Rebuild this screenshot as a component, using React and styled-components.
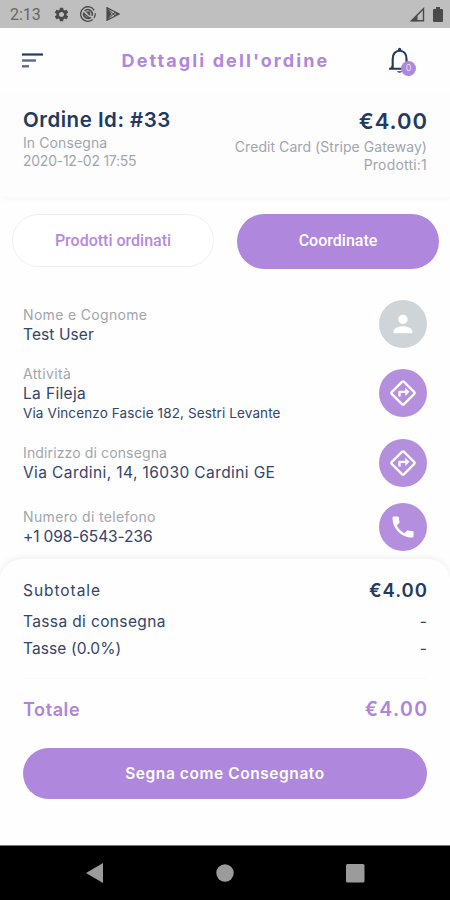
import React from "react";
import styled, { createGlobalStyle, css } from "styled-components";
import {
  MdPerson,
  MdOutlineDirections,
  MdPhone,
  MdSettings,
} from "react-icons/md";

const purple = "#af87dc";
const navy = "#223a60";
const slate = "#34446a";
const grey = "#a1a5ae";

const GlobalStyle = createGlobalStyle`
  * {
    box-sizing: border-box;
  }
  body {
    margin: 0;
    background: #fefefe;
    font-family: Inter, "Open Sans", sans-serif;
    color: ${navy};
  }
`;

const Screen = styled.div`
  display: flex;
  flex-direction: column;
  width: 450px;
  height: 900px;
  overflow: hidden;
`;

const StatusBar = styled.div`
  display: flex;
  align-items: center;
  justify-content: space-between;
  height: 28px;
  padding: 0 7px 0 10px;
  background: #bfbfbf;
  color: #4a4a4a;
`;
const StatusGroup = styled.div`
  display: flex;
  align-items: center;
  gap: ${(props) => props.$gap}px;
`;
const Clock = styled.span`
  width: 33px;
  font: 400 16px Roboto, sans-serif;
  color: #666;
`;

const Header = styled.header`
  display: flex;
  align-items: center;
  justify-content: space-between;
  height: 66px;
  padding: 0 33px 0 22px;
`;
const Title = styled.h1`
  margin: 0 0 1px 18px;
  font-size: 18px;
  font-weight: 700;
  letter-spacing: 2.1px;
  color: ${purple};
`;
const BellBox = styled.div`
  position: relative;
  width: 28px;
  height: 28px;
`;
const Badge = styled.span`
  position: absolute;
  right: 1px;
  bottom: -1px;
  width: 15px;
  height: 15px;
  border-radius: 50%;
  background: ${purple};
  color: #e6d8f6;
  font-size: 9px;
  line-height: 14px;
  text-align: center;
`;

const Order = styled.section`
  display: flex;
  justify-content: space-between;
  height: 103px;
  padding: 13px 23px 0;
  background: #fdfdfe;
  box-shadow: 0 2px 5px rgba(0, 0, 0, 0.035);
`;
const OrderSide = styled.div`
  display: flex;
  flex-direction: column;
  align-items: ${(props) => (props.$right ? "flex-end" : "flex-start")};
  padding-top: ${(props) => (props.$right ? 1 : 0)}px;
`;

const spacing = css`
  letter-spacing: ${(props) => props.$space || 0}px;
  white-space: nowrap;
`;

const OrderHeading = styled.h2`
  margin: 0 ${(props) => -props.$space}px ${(props) => props.$gap}px 0;
  font-size: ${(props) => props.$size}px;
  font-weight: 600;
  line-height: 26px;
  ${spacing}
`;
const Muted = styled.div`
  font-size: 14px;
  line-height: 18px;
  color: ${grey};
  ${spacing}
`;

const Tabs = styled.div`
  display: flex;
  gap: 23px;
  padding: 17px 11px 0 12px;
`;
const Tab = styled.button`
  width: 202px;
  height: ${(props) => (props.$active ? 55 : 53)}px;
  padding: 0 0 ${(props) => (props.$active ? 2 : 0)}px;
  border: ${(props) => (props.$active ? "0" : "1px solid #f0eff5")};
  border-radius: 28px;
  background: ${(props) => (props.$active ? purple : "#fff")};
  color: ${(props) => (props.$active ? "#fff" : "#b68add")};
  font: 500 16px Roboto, sans-serif;
`;

const Details = styled.div`
  height: 290px;
  padding: 24px 23px 0;
`;
const DetailRow = styled.div`
  display: flex;
  justify-content: space-between;
  align-items: center;
  height: ${(props) => props.$height}px;
`;
const DetailText = styled.div`
  padding-top: 2px;
`;
const Value = styled.div`
  font-size: ${(props) => (props.$small ? 13.5 : 15.5)}px;
  line-height: ${(props) => (props.$small ? 19 : 21)}px;
  color: ${slate};
  ${spacing}
`;
const RoundButton = styled.button`
  display: flex;
  align-items: center;
  justify-content: center;
  width: 48px;
  height: 48px;
  padding: 0;
  border: 0;
  border-radius: 50%;
  background: ${(props) => (props.$off ? "#cfd4d9" : "#b48fde")};
  color: #fff;
`;

const Summary = styled.section`
  position: relative;
  flex: 1;
  padding: 17px 23px 0;
  border-radius: 22px 22px 0 0;
  background: #fefefe;
  box-shadow: 0 -2px 6px rgba(0, 0, 0, 0.06);
`;
const SummaryRow = styled.div`
  display: flex;
  justify-content: space-between;
  align-items: center;
  height: ${(props) => props.$height}px;
`;
const SummaryLabel = styled.span`
  font-size: 15.5px;
  color: ${slate};
  ${spacing}
`;
const Amount = styled.span`
  margin-right: ${(props) => -props.$space}px;
  font-size: 18.5px;
  font-weight: 600;
  ${spacing}
`;
const Total = styled(SummaryRow)`
  margin-top: 20px;
  border-top: 1px solid #fafafb;
  color: #b083dc;
`;
const TotalLabel = styled.span`
  font-size: 18px;
  font-weight: 600;
  ${spacing}
`;
const TotalAmount = styled(Amount)`
  font-size: 19.5px;
`;
const Confirm = styled.button`
  display: block;
  width: 404px;
  height: 51px;
  margin-top: 9px;
  padding: 0;
  border: 0;
  border-radius: 26px;
  background: ${purple};
  color: #fff;
  font: 600 15.5px Inter, sans-serif;
  ${spacing}
`;

const NavBar = styled.nav`
  display: flex;
  justify-content: space-between;
  height: 55px;
  padding: 17px 85px 0 86px;
  border-top: 1px solid #777;
  background: #000;
`;

const SortIcon = () => (
  <svg width="22" height="16" viewBox="0 0 22 16">
    <path d="M0 1.5h21" stroke={navy} strokeWidth="2.2" />
    <path d="M0 7.5h14" stroke="#5a6c8b" strokeWidth="2.4" />
    <path d="M0 13.3h7" stroke="#5a6c8b" strokeWidth="2.4" />
  </svg>
);

const BellIcon = () => (
  <svg width="24" height="28" viewBox="0 0 24 28" fill="none">
    <path
      d="M0 21.7h20M3.7 21.5V12c0-5 2.6-8.2 6.9-8.2s6.9 3.2 6.9 8.2v9.5"
      stroke={navy}
      strokeWidth="2.1"
    />
    <path d="M1.4 20.6 3.7 17.5v3.5z" fill={navy} />
    <circle cx="10.6" cy="2.4" r="1.6" fill={navy} />
    <path d="M7.9 24.2a2.8 2 0 0 0 5.4 0z" fill={navy} />
  </svg>
);

const SyncIcon = () => (
  <svg width="16" height="16" viewBox="0 0 16 16" fill="none" stroke="currentColor">
    <path d="M14.2 4.3A7.3 7.3 0 1 0 12.7 13.6M15.2 7.2a7.3 7.3 0 0 1-1.3 5" strokeWidth="1.3" />
    <path d="M4.6 4.8A4.6 4.6 0 0 1 12 9.8M11 11.4A4.6 4.6 0 0 1 3.8 6.4" strokeWidth="1.6" />
    <path d="M5.5 5.6h4.7v4.6z" fill="currentColor" stroke="none" />
    <path d="M4 7.5l5.5 4.5" strokeWidth="1.2" />
  </svg>
);

const PlayIcon = () => (
  <svg width="14" height="14" viewBox="0 0 14 14">
    <path d="M1 .7v12.6L13.2 7z" fill="none" stroke="currentColor" strokeWidth="1.2" />
    <path d="M1 .7v12.6L5.7 7z" fill="currentColor" />
    <path d="M1 .7 9.3 9M1 13.3 9.3 5M9.3 5l-2 2 2 2" fill="none" stroke="currentColor" />
    <path d="M9.5 5l3.7 2-3.7 2z" fill="currentColor" />
  </svg>
);

const details = [
  {
    label: "Nome e Cognome",
    labelSpace: 0.33,
    lines: [{ text: "Test User", space: 0.1 }],
    height: 62,
    icon: MdPerson,
    off: true,
  },
  {
    label: "Attività",
    labelSpace: 0.35,
    lines: [
      { text: "La Fileja", space: 0.35 },
      { text: "Via Vincenzo Fascie 182, Sestri Levante", space: 0.12, small: true },
    ],
    height: 76,
    icon: MdOutlineDirections,
  },
  {
    label: "Indirizzo di consegna",
    labelSpace: 0.13,
    lines: [{ text: "Via Cardini, 14, 16030 Cardini GE", space: 0.4 }],
    height: 63,
    icon: MdOutlineDirections,
  },
  {
    label: "Numero di telefono",
    labelSpace: 0.35,
    lines: [{ text: "+1 098-6543-236", space: -0.1 }],
    height: 65,
    icon: MdPhone,
  },
];

const App = () => {
  return (
    <Screen>
      <GlobalStyle />
      <StatusBar>
        <StatusGroup $gap={10}>
          <Clock>2:13</Clock>
          <MdSettings size={17} />
          <SyncIcon />
          <PlayIcon />
        </StatusGroup>
        <StatusGroup $gap={8}>
          <svg width="15" height="15" viewBox="0 0 15 15">
            <path d="M1.5 13.8h12V1.8z" fill="none" stroke="currentColor" strokeWidth="1.4" />
            <path d="M1 14.3h6.5V8z" fill="currentColor" />
          </svg>
          <svg width="10" height="15" viewBox="0 0 10 15">
            <path d="M3 0h4v2h2q1 0 1 1v11q0 1-1 1H1q-1 0-1-1V3q0-1 1-1h2z" fill="currentColor" />
          </svg>
        </StatusGroup>
      </StatusBar>

      <Header>
        <SortIcon />
        <Title>Dettagli dell'ordine</Title>
        <BellBox>
          <BellIcon />
          <Badge>0</Badge>
        </BellBox>
      </Header>

      <Order>
        <OrderSide>
          <OrderHeading $size={20.5} $gap={1} $space={0.5}>
            Ordine Id: #33
          </OrderHeading>
          <Muted $space={0.1}>In Consegna</Muted>
          <Muted $space={-0.25}>2020-12-02 17:55</Muted>
        </OrderSide>
        <OrderSide $right>
          <OrderHeading $size={22} $gap={4} $space={1}>
            €4.00
          </OrderHeading>
          <Muted $space={0.06}>Credit Card (Stripe Gateway)</Muted>
          <Muted $space={0.2}>Prodotti:1</Muted>
        </OrderSide>
      </Order>

      <Tabs>
        <Tab>Prodotti ordinati</Tab>
        <Tab $active>Coordinate</Tab>
      </Tabs>

      <Details>
        {details.map((item) => {
          const Icon = item.icon;
          return (
            <DetailRow key={item.label} $height={item.height}>
              <DetailText>
                <Muted $space={item.labelSpace}>{item.label}</Muted>
                {item.lines.map((line) => (
                  <Value key={line.text} $small={line.small} $space={line.space}>
                    {line.text}
                  </Value>
                ))}
              </DetailText>
              <RoundButton $off={item.off}>
                <Icon size={28} />
              </RoundButton>
            </DetailRow>
          );
        })}
      </Details>

      <Summary>
        <SummaryRow $height={28}>
          <SummaryLabel $space={0.95}>Subtotale</SummaryLabel>
          <Amount $space={1}>€4.00</Amount>
        </SummaryRow>
        <SummaryRow $height={35}>
          <SummaryLabel $space={0.37}>Tassa di consegna</SummaryLabel>
          <SummaryLabel>-</SummaryLabel>
        </SummaryRow>
        <SummaryRow $height={19}>
          <SummaryLabel $space={0.1}>Tasse (0.0%)</SummaryLabel>
          <SummaryLabel>-</SummaryLabel>
        </SummaryRow>
        <Total $height={61}>
          <TotalLabel $space={0.6}>Totale</TotalLabel>
          <TotalAmount $space={1.3}>€4.00</TotalAmount>
        </Total>
        <Confirm $space={0.57}>Segna come Consegnato</Confirm>
      </Summary>

      <NavBar>
        <svg width="17" height="20" viewBox="0 0 17 20">
          <path d="M0 10 17 0v20z" fill="#9b9b9b" />
        </svg>
        <svg width="18" height="19" viewBox="0 0 18 19">
          <circle cx="9" cy="10" r="8.7" fill="#9b9b9b" />
        </svg>
        <svg width="19" height="20" viewBox="0 0 19 20">
          <rect y="1" width="18.5" height="18.5" rx="1.5" fill="#9b9b9b" />
        </svg>
      </NavBar>
    </Screen>
  );
};

export default App;
